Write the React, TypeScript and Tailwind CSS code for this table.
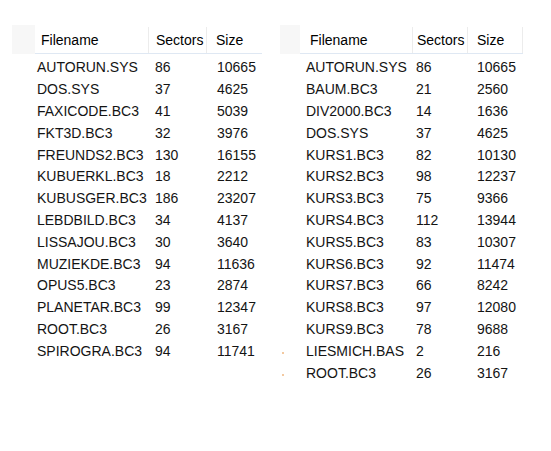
import React from "react";

type Row = [string, string, string];

const left: Row[] = [
  ["AUTORUN.SYS", "86", "10665"],
  ["DOS.SYS", "37", "4625"],
  ["FAXICODE.BC3", "41", "5039"],
  ["FKT3D.BC3", "32", "3976"],
  ["FREUNDS2.BC3", "130", "16155"],
  ["KUBUERKL.BC3", "18", "2212"],
  ["KUBUSGER.BC3", "186", "23207"],
  ["LEBDBILD.BC3", "34", "4137"],
  ["LISSAJOU.BC3", "30", "3640"],
  ["MUZIEKDE.BC3", "94", "11636"],
  ["OPUS5.BC3", "23", "2874"],
  ["PLANETAR.BC3", "99", "12347"],
  ["ROOT.BC3", "26", "3167"],
  ["SPIROGRA.BC3", "94", "11741"],
];

const right: Row[] = [
  ["AUTORUN.SYS", "86", "10665"],
  ["BAUM.BC3", "21", "2560"],
  ["DIV2000.BC3", "14", "1636"],
  ["DOS.SYS", "37", "4625"],
  ["KURS1.BC3", "82", "10130"],
  ["KURS2.BC3", "98", "12237"],
  ["KURS3.BC3", "75", "9366"],
  ["KURS4.BC3", "112", "13944"],
  ["KURS5.BC3", "83", "10307"],
  ["KURS6.BC3", "92", "11474"],
  ["KURS7.BC3", "66", "8242"],
  ["KURS8.BC3", "97", "12080"],
  ["KURS9.BC3", "78", "9688"],
  ["LIESMICH.BAS", "2", "216"],
  ["ROOT.BC3", "26", "3167"],
];

function LeftTable() {
  return (
    <div className="flex flex-col w-[250px] shrink-0">
      <div className="flex h-[29px] mb-[3px]">
        <div className="w-[23px] bg-[#f7f7f7]" />
        <div className="flex border-b border-[#dfe8f3] pt-[2px]">
          <div className="w-[114px] pl-[6px] flex items-center border-r border-[#ececec]">Filename</div>
          <div className="w-[58px] pl-[7px] flex items-center border-r border-[#ececec]">Sectors</div>
          <div className="w-[55px] pl-[9px] flex items-center">Size</div>
        </div>
      </div>
      {left.map((r) => (
        <div key={r[0]} className="flex h-[21.8px] items-center text-[#141414]">
          <div className="w-[23px]" />
          <div className="w-[114px] pl-[2px]">{r[0]}</div>
          <div className="w-[58px] pl-[6px]">{r[1]}</div>
          <div className="w-[55px] pl-[10px]">{r[2]}</div>
        </div>
      ))}
    </div>
  );
}

function RightTable() {
  return (
    <div className="flex flex-col w-[243px] shrink-0">
      <div className="flex h-[29px] mb-[3px]">
        <div className="w-[20px] bg-[#f7f7f7]" />
        <div className="flex border-b border-[#dfe8f3] pt-[2px]">
          <div className="w-[113px] pl-[10px] flex items-center border-r border-[#ececec]">Filename</div>
          <div className="w-[55px] pl-[4px] flex items-center border-r border-[#ececec]">Sectors</div>
          <div className="w-[55px] pl-[9px] flex items-center border-r border-[#ececec]">Size</div>
        </div>
      </div>
      {right.map((r, i) => (
        <div key={r[0]} className="flex h-[21.8px] items-center text-[#141414]">
          <div className="w-[20px] flex items-center">
            {i >= 13 ? <div className="ml-[2px] mt-[3px] w-[2px] h-[2px] bg-[#f3c9a0]" /> : null}
          </div>
          <div className="w-[113px] pl-[6px]">{r[0]}</div>
          <div className="w-[55px] pl-[3px]">{r[1]}</div>
          <div className="w-[55px] pl-[9px]">{r[2]}</div>
        </div>
      ))}
    </div>
  );
}

export default function App() {
  return (
    <div
      className="w-[551px] h-[451px] bg-white overflow-hidden text-[14px] text-black"
      style={{ fontFamily: '"Liberation Sans", Arial, sans-serif' }}
    >
      <div className="flex pt-[25px] pl-[12px] gap-[18px]">
        <LeftTable />
        <RightTable />
      </div>
    </div>
  );
}
